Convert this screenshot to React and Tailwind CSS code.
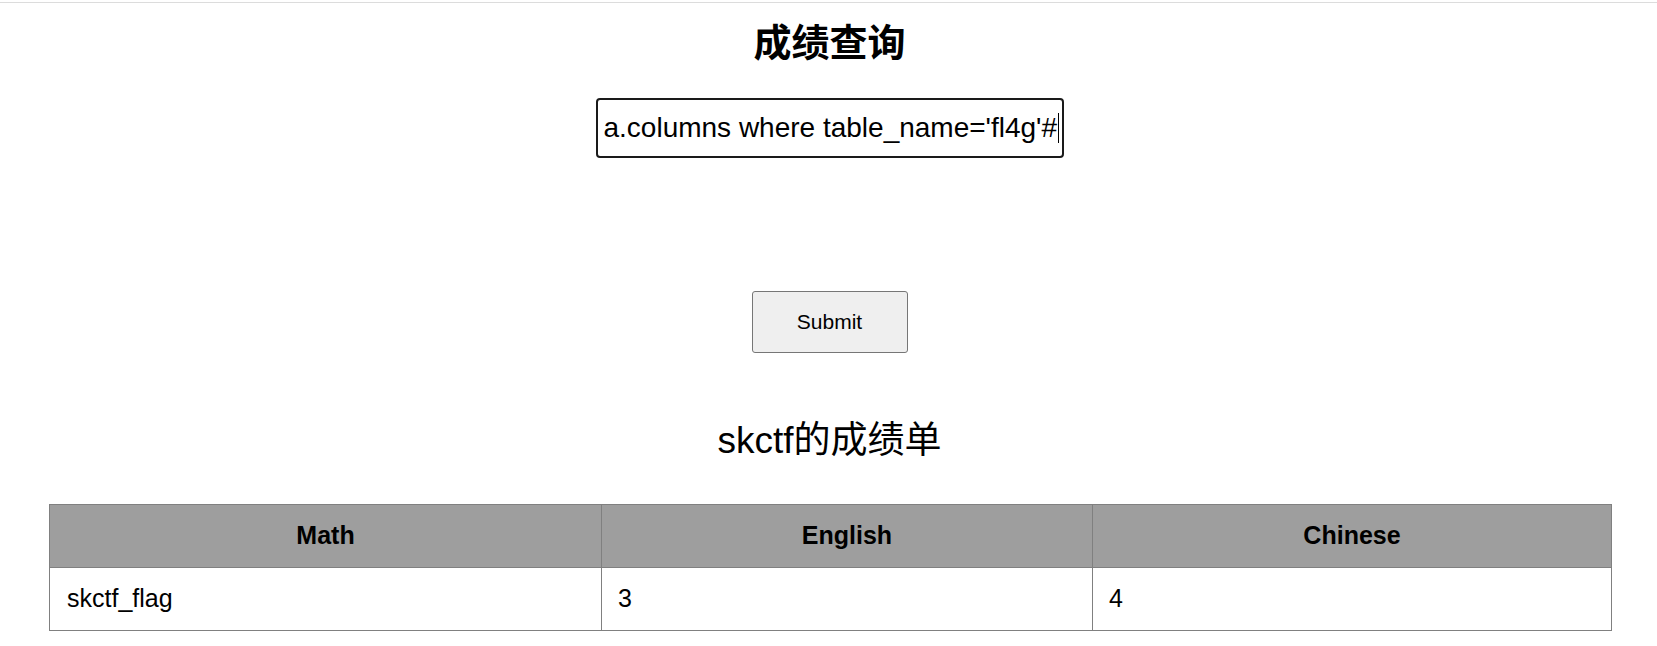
export default function App() {
  // the field is scrolled to its end, so only the tail of the query shows
  const visibleQuery = "a.columns where table_name='fl4g'#"

  return (
    <div className="min-h-screen bg-white font-['Liberation_Sans','Noto_Sans_CJK_SC',sans-serif] text-black">
      <div className="pt-[2px]">
        <div className="h-px bg-[#dcdcdc]" />
      </div>

      <div className="pl-[2px]">
        <h1 className="mt-[21px] text-center text-[38px] font-bold leading-[38px]">成绩查询</h1>

        <div className="mx-auto mt-[36px] flex h-[60px] w-[468px] items-center overflow-hidden rounded-[4px] border-2 border-[#1a1a1a] pl-[6px]">
          <span className="whitespace-nowrap text-[28px] leading-none">{visibleQuery}</span>
          <span className="ml-px h-[30px] w-px shrink-0 bg-black" />
        </div>

        <button
          type="button"
          className="mx-auto mt-[133px] block h-[62px] w-[156px] rounded-[3px] border border-[#767676] bg-[#efefef] text-[21px] text-black"
        >
          Submit
        </button>

        <h2 className="mt-[66px] text-center text-[37px] font-normal leading-[44px]">skctf的成绩单</h2>
      </div>

      <table className="ml-[49px] mt-[41px] w-[1562px] table-fixed border-collapse text-[25px]">
        <colgroup>
          <col className="w-[552px]" />
          <col className="w-[491px]" />
          <col className="w-[519px]" />
        </colgroup>
        <thead>
          <tr className="h-[63px] bg-[#9e9e9e]">
            <th className="border border-[#808080] text-center font-bold">Math</th>
            <th className="border border-[#808080] text-center font-bold">English</th>
            <th className="border border-[#808080] text-center font-bold">Chinese</th>
          </tr>
        </thead>
        <tbody>
          <tr className="h-[63px]">
            <td className="border border-[#808080] px-[17px] text-left">skctf_flag</td>
            <td className="border border-[#808080] px-[16px] text-left">3</td>
            <td className="border border-[#808080] px-[16px] text-left">4</td>
          </tr>
        </tbody>
      </table>
    </div>
  )
}
